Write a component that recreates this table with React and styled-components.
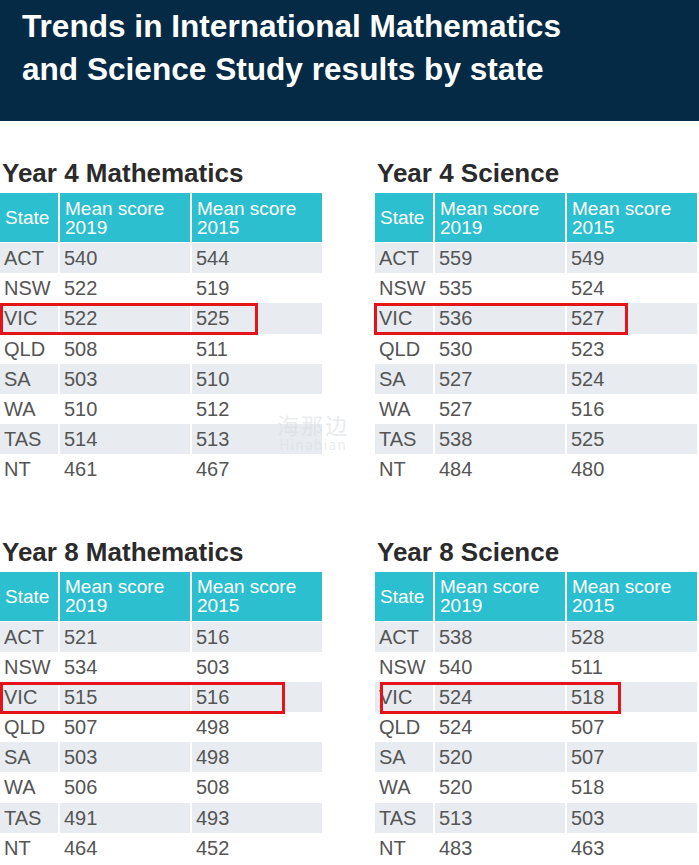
import styled, { createGlobalStyle } from "styled-components";

const GlobalStyle = createGlobalStyle`
  html, body {
    margin: 0;
    padding: 0;
    background: #ffffff;
    font-family: "Liberation Sans", Arial, sans-serif;
  }
`;

const groups = [
  [
    {
      title: "Year 4 Mathematics",
      rows: [
        ["ACT", 540, 544],
        ["NSW", 522, 519],
        ["VIC", 522, 525],
        ["QLD", 508, 511],
        ["SA", 503, 510],
        ["WA", 510, 512],
        ["TAS", 514, 513],
        ["NT", 461, 467],
      ],
      box: { left: 0, width: 258 },
    },
    {
      title: "Year 4 Science",
      rows: [
        ["ACT", 559, 549],
        ["NSW", 535, 524],
        ["VIC", 536, 527],
        ["QLD", 530, 523],
        ["SA", 527, 524],
        ["WA", 527, 516],
        ["TAS", 538, 525],
        ["NT", 484, 480],
      ],
      box: { left: -1, width: 254 },
    },
  ],
  [
    {
      title: "Year 8 Mathematics",
      rows: [
        ["ACT", 521, 516],
        ["NSW", 534, 503],
        ["VIC", 515, 516],
        ["QLD", 507, 498],
        ["SA", 503, 498],
        ["WA", 506, 508],
        ["TAS", 491, 493],
        ["NT", 464, 452],
      ],
      box: { left: 0, width: 285 },
    },
    {
      title: "Year 8 Science",
      rows: [
        ["ACT", 538, 528],
        ["NSW", 540, 511],
        ["VIC", 524, 518],
        ["QLD", 524, 507],
        ["SA", 520, 507],
        ["WA", 520, 518],
        ["TAS", 513, 503],
        ["NT", 483, 463],
      ],
      box: { left: 5, width: 241 },
    },
  ],
];

function ScoreTable({ title, rows, box }) {
  return (
    <Block>
      <BlockTitle>{title}</BlockTitle>
      <HeadRow>
        <HeadCell>State</HeadCell>
        <HeadCell>
          Mean score
          <br />
          2019
        </HeadCell>
        <HeadCell>
          Mean score
          <br />
          2015
        </HeadCell>
      </HeadRow>
      {rows.map(([state, a, b], i) => (
        <Row key={state} striped={i % 2 === 0}>
          <Cell>{state}</Cell>
          <Cell>{a}</Cell>
          <Cell>{b}</Cell>
          {state === "VIC" && (
            <Highlight style={{ left: box.left, width: box.width }} />
          )}
        </Row>
      ))}
    </Block>
  );
}

export default function App() {
  return (
    <Page>
      <GlobalStyle />
      <Banner>
        <BannerTitle>
          Trends in International Mathematics
          <br />
          and Science Study results by state
        </BannerTitle>
      </Banner>
      {groups.map((pair, gi) => (
        <Group key={gi}>
          {pair.map((t) => (
            <ScoreTable key={t.title} {...t} />
          ))}
        </Group>
      ))}
      <Watermark>
        <span>海那边</span>
        <small>Hinabian</small>
      </Watermark>
    </Page>
  );
}

const Page = styled.div`
  position: relative;
  width: 699px;
  overflow: hidden;
`;

const Banner = styled.header`
  background: #052a45;
  height: 121px;
  padding: 5px 0 0 22px;
  box-sizing: border-box;
`;

const BannerTitle = styled.h1`
  margin: 0;
  color: #ffffff;
  font-size: 31.6px;
  line-height: 43px;
  font-weight: 700;
`;

const Group = styled.section`
  display: grid;
  grid-template-columns: 322px 324px;
  column-gap: 53px;
  margin-top: 38px;

  & + & {
    margin-top: 53px;
  }
`;

const Block = styled.div`
  display: flex;
  flex-direction: column;
`;

const BlockTitle = styled.h2`
  margin: 0 0 6px 2px;
  font-size: 26px;
  line-height: 28px;
  font-weight: 700;
  color: #2b2b2b;
`;

const HeadRow = styled.div`
  display: grid;
  grid-template-columns: 58px 130px 130px;
  column-gap: 2px;
  height: 49px;
  margin-bottom: 1px;
`;

const HeadCell = styled.div`
  background: #2bbfcf;
  color: #ffffff;
  font-size: 19px;
  line-height: 19px;
  padding-left: 5px;
  display: flex;
  align-items: center;
`;

const Row = styled.div`
  position: relative;
  display: grid;
  grid-template-columns: 58px 130px 130px;
  column-gap: 2px;
  height: 30.2px;

  & > div {
    background: ${({ striped }) => (striped ? "#e8ecf0" : "transparent")};
  }
`;

const Cell = styled.div`
  color: #555555;
  font-size: 20px;
  line-height: 30px;
  padding-left: 4px;
`;

const Highlight = styled.span`
  position: absolute;
  top: 0;
  height: 32px;
  box-sizing: border-box;
  border: 3px solid #e4141b;
  pointer-events: none;
`;

const Watermark = styled.div`
  position: absolute;
  left: 277px;
  top: 411px;
  display: flex;
  flex-direction: column;
  align-items: center;
  color: rgba(215, 220, 226, 0.55);
  font-family: "Noto Sans CJK SC", "Liberation Sans", sans-serif;
  pointer-events: none;

  span {
    font-size: 22px;
    line-height: 26px;
    letter-spacing: 2px;
  }

  small {
    font-size: 14px;
    line-height: 15px;
    letter-spacing: 1px;
  }
`;
